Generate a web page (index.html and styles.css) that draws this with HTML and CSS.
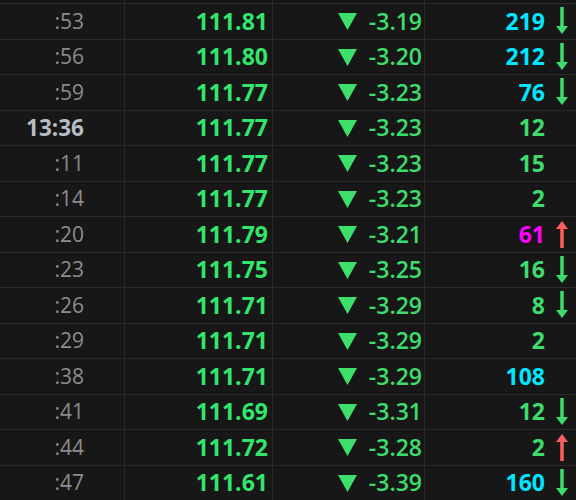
FILE: index.html
```html
<!DOCTYPE html>
<html>
<head>
<meta charset="utf-8">
<link rel="stylesheet" href="styles.css">
</head>
<body>
<svg width="0" height="0" class="defs">
  <defs>
    <symbol id="down" viewBox="0 0 12 28"><rect x="4.25" y="0" width="3.5" height="20"/><polygon points="0,19 12,19 6,27"/></symbol>
    <symbol id="up" viewBox="0 0 12 28"><rect x="4.25" y="8" width="3.5" height="20"/><polygon points="0,9 12,9 6,1"/></symbol>
    <symbol id="tri" viewBox="0 0 19 17"><polygon points="0,0 19,0 9.5,17"/></symbol>
  </defs>
</svg>
<div class="table">
  <div class="row"><div class="c time"></div><div class="c price"></div><div class="c chg"></div><div class="c vol"><span class="arr"><svg class="ad"><use href="#down"/></svg></span></div></div>
  <div class="row"><div class="c time">:53</div><div class="c price">111.81</div><div class="c chg"><svg class="tri"><use href="#tri"/></svg><span>-3.19</span></div><div class="c vol"><span class="n cyan">219</span><span class="arr"><svg class="ad"><use href="#down"/></svg></span></div></div>
  <div class="row"><div class="c time">:56</div><div class="c price">111.80</div><div class="c chg"><svg class="tri"><use href="#tri"/></svg><span>-3.20</span></div><div class="c vol"><span class="n cyan">212</span><span class="arr"><svg class="ad"><use href="#down"/></svg></span></div></div>
  <div class="row"><div class="c time">:59</div><div class="c price">111.77</div><div class="c chg"><svg class="tri"><use href="#tri"/></svg><span>-3.23</span></div><div class="c vol"><span class="n cyan">76</span><span class="arr"><svg class="ad"><use href="#down"/></svg></span></div></div>
  <div class="row"><div class="c time strong">13:36</div><div class="c price">111.77</div><div class="c chg"><svg class="tri"><use href="#tri"/></svg><span>-3.23</span></div><div class="c vol"><span class="n">12</span><span class="arr"></span></div></div>
  <div class="row"><div class="c time">:11</div><div class="c price">111.77</div><div class="c chg"><svg class="tri"><use href="#tri"/></svg><span>-3.23</span></div><div class="c vol"><span class="n">15</span><span class="arr"></span></div></div>
  <div class="row"><div class="c time">:14</div><div class="c price">111.77</div><div class="c chg"><svg class="tri"><use href="#tri"/></svg><span>-3.23</span></div><div class="c vol"><span class="n">2</span><span class="arr"></span></div></div>
  <div class="row"><div class="c time">:20</div><div class="c price">111.79</div><div class="c chg"><svg class="tri"><use href="#tri"/></svg><span>-3.21</span></div><div class="c vol"><span class="n magenta">61</span><span class="arr"><svg class="au"><use href="#up"/></svg></span></div></div>
  <div class="row"><div class="c time">:23</div><div class="c price">111.75</div><div class="c chg"><svg class="tri"><use href="#tri"/></svg><span>-3.25</span></div><div class="c vol"><span class="n">16</span><span class="arr"><svg class="ad"><use href="#down"/></svg></span></div></div>
  <div class="row"><div class="c time">:26</div><div class="c price">111.71</div><div class="c chg"><svg class="tri"><use href="#tri"/></svg><span>-3.29</span></div><div class="c vol"><span class="n">8</span><span class="arr"><svg class="ad"><use href="#down"/></svg></span></div></div>
  <div class="row"><div class="c time">:29</div><div class="c price">111.71</div><div class="c chg"><svg class="tri"><use href="#tri"/></svg><span>-3.29</span></div><div class="c vol"><span class="n">2</span><span class="arr"></span></div></div>
  <div class="row"><div class="c time">:38</div><div class="c price">111.71</div><div class="c chg"><svg class="tri"><use href="#tri"/></svg><span>-3.29</span></div><div class="c vol"><span class="n cyan">108</span><span class="arr"></span></div></div>
  <div class="row"><div class="c time">:41</div><div class="c price">111.69</div><div class="c chg"><svg class="tri"><use href="#tri"/></svg><span>-3.31</span></div><div class="c vol"><span class="n">12</span><span class="arr"><svg class="ad"><use href="#down"/></svg></span></div></div>
  <div class="row"><div class="c time">:44</div><div class="c price">111.72</div><div class="c chg"><svg class="tri"><use href="#tri"/></svg><span>-3.28</span></div><div class="c vol"><span class="n">2</span><span class="arr"><svg class="au"><use href="#up"/></svg></span></div></div>
  <div class="row"><div class="c time">:47</div><div class="c price">111.61</div><div class="c chg"><svg class="tri"><use href="#tri"/></svg><span>-3.39</span></div><div class="c vol"><span class="n cyan">160</span><span class="arr"><svg class="ad"><use href="#down"/></svg></span></div></div>
</div>
</body>
</html>
```
FILE: styles.css
```css
html, body {
  margin: 0;
  padding: 0;
  background: #171717;
  overflow: hidden;
}
.defs {
  position: absolute;
  width: 0;
  height: 0;
}
.table {
  margin-top: -31.5px;
  font-family: "Open Sans", "Noto Sans", sans-serif;
  font-size: 23px;
}
.row {
  display: grid;
  grid-template-columns: 125px 148px 152px 151px;
  height: 35.5px;
  box-sizing: border-box;
  border-bottom: 1px solid #2a2a2a;
}
.c {
  display: flex;
  align-items: center;
  justify-content: flex-end;
  border-right: 1px solid #2a2a2a;
  line-height: 1;
  white-space: nowrap;
}
.c:last-child {
  border-right: none;
}
.time {
  color: #8c8c8c;
  font-weight: 400;
  font-size: 21px;
  padding-right: 40px;
}
.time.strong {
  color: #b7bdc4;
  font-weight: 700;
  font-size: 22.5px;
}
.price {
  color: #33e56c;
  font-weight: 700;
  padding-right: 4px;
}
.chg {
  color: #3edc6c;
  font-weight: 600;
  padding-right: 2px;
}
.tri {
  width: 19px;
  height: 17px;
  fill: #3ee06c;
  margin-right: 12px;
  margin-top: 1px;
}
.vol {
  color: #3edc6c;
  font-weight: 700;
  padding-right: 8px;
}
.n.cyan { color: #00e6ff; }
.n.magenta { color: #ff00ff; }
.arr {
  width: 12px;
  height: 28px;
  margin-left: 11px;
  display: flex;
}
.arr svg {
  width: 12px;
  height: 28px;
}
.ad { fill: #3edc6c; }
.au { fill: #ff5e5e; }
```
